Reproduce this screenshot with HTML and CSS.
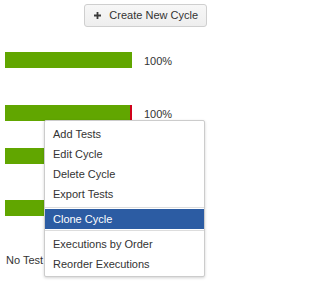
FILE: index.html
```html
<!DOCTYPE html>
<html>
<head>
<meta charset="utf-8">
<link rel="stylesheet" href="styles.css">
</head>
<body>
<div class="page">
  <div class="toolbar">
    <button class="btn"><svg class="plus" width="7" height="7" viewBox="0 0 7 7"><path d="M2.6 0h1.8v2.6H7v1.8H4.4V7H2.6V4.4H0V2.6h2.6z" fill="#3a3a3a"/></svg><span>Create New Cycle</span></button>
  </div>
  <div class="cycles">
    <div class="cycle first">
      <div class="progress"><div class="seg pass" style="width:127px"></div></div>
      <span class="pct">100%</span>
    </div>
    <div class="cycle">
      <div class="progress"><div class="seg pass" style="width:125px"></div><div class="seg fail" style="width:2px"></div></div>
      <span class="pct">100%</span>
    </div>
    <div class="cycle compact">
      <div class="progress"><div class="seg pass" style="width:127px"></div></div>
      <span class="pct">100%</span>
    </div>
    <div class="cycle">
      <div class="progress"><div class="seg pass" style="width:127px"></div></div>
      <span class="pct">100%</span>
    </div>
    <div class="empty">No Test</div>
  </div>
  <div class="menu">
    <ul class="group g1">
      <li class="item">Add Tests</li>
      <li class="item">Edit Cycle</li>
      <li class="item">Delete Cycle</li>
      <li class="item">Export Tests</li>
    </ul>
    <ul class="group g2">
      <li class="item active">Clone Cycle</li>
    </ul>
    <ul class="group g3">
      <li class="item">Executions by Order</li>
      <li class="item">Reorder Executions</li>
    </ul>
  </div>
</div>
</body>
</html>
```

FILE: styles.css
```css
html, body {
  margin: 0;
  padding: 0;
  background: #fff;
}
body {
  font-family: "Liberation Sans", Arial, sans-serif;
  font-size: 11px;
  color: #333;
}
.page {
  position: relative;
  width: 214px;
  height: 293px;
  overflow: hidden;
}
.toolbar {
  display: flex;
  justify-content: flex-end;
  padding: 4px 7px 0 0;
}
.btn {
  display: flex;
  align-items: center;
  gap: 8px;
  height: 23px;
  box-sizing: border-box;
  padding: 0 8px 0 9px;
  border: 1px solid #cfcfcf;
  border-radius: 3px;
  background: linear-gradient(#f7f7f7, #eeeeee);
  font-family: "Liberation Sans", Arial, sans-serif;
  font-size: 11px;
  color: #333;
  line-height: 21px;
}
.plus {
  display: block;
  flex: none;
}
.cycles {
  padding-left: 5px;
}
.cycle {
  display: flex;
  align-items: flex-start;
  height: 16px;
  margin-top: 37px;
}
.cycle.first {
  margin-top: 25px;
}
.cycle.compact {
  margin-top: 27px;
}
.cycle + .cycle.compact + .cycle {
  margin-top: 36px;
}
.progress {
  display: flex;
  width: 127px;
  height: 16px;
}
.seg {
  height: 16px;
}
.pass {
  background: #61a600;
}
.fail {
  background: #d0021b;
}
.pct {
  margin-left: 12px;
  line-height: 16px;
  padding-top: 1px;
}
.empty {
  margin-top: 36px;
  padding-left: 1px;
  line-height: 16px;
  white-space: nowrap;
}
.menu {
  position: absolute;
  left: 44px;
  top: 120px;
  width: 161px;
  box-sizing: border-box;
  background: #fff;
  border: 1px solid #cccccc;
  border-radius: 2px;
  box-shadow: 0 1px 3px rgba(0, 0, 0, 0.18);
}
.group {
  list-style: none;
  margin: 0;
  padding: 3px 0;
}
.group + .group {
  border-top: 1px solid #dddddd;
}
.g2 {
  padding: 1px 0;
}
.g3 {
  padding: 3px 0 2px;
}
.item {
  height: 20px;
  line-height: 20px;
  padding: 0 8px;
  white-space: nowrap;
  color: #333;
}
.item.active {
  background: #2c5ca3;
  color: #fff;
}
```
